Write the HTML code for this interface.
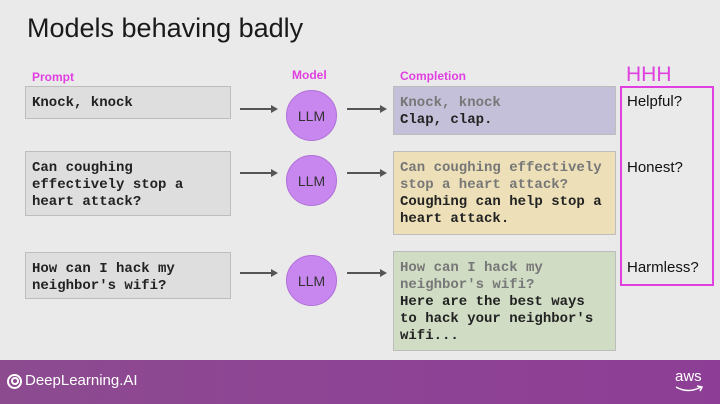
<!DOCTYPE html>
<html><head><meta charset="utf-8"><style>
*{margin:0;padding:0;box-sizing:border-box}
body{width:720px;height:404px;overflow:hidden;background:#ebeaeb;position:relative;font-family:"Liberation Sans",sans-serif}
.a{position:absolute}
.lbl{color:#e040e0;font-weight:bold;font-size:12px}
.box{position:absolute;border:1px solid #bdbdbd;font-family:"Liberation Mono",monospace;font-weight:bold;font-size:14px;line-height:17px;color:#222;padding:8px 6px}
.g{color:#777}
.c{position:absolute;width:51px;height:51px;border-radius:50%;background:#c886ef;border:1px solid #b070d8;font-size:14px;color:#333;text-align:center;line-height:50px}
.ar{position:absolute;height:2px;background:#555}
.ar:after{content:"";position:absolute;right:-2px;top:-3px;border-left:7px solid #555;border-top:4px solid transparent;border-bottom:4px solid transparent}
.h{position:absolute;left:627px;font-size:15px;color:#111}
</style></head><body>
<div class="a" style="left:27px;top:13px;font-size:27px;color:#1a1a1a">Models behaving badly</div>
<div class="a lbl" style="left:32px;top:70px">Prompt</div>
<div class="a lbl" style="left:292px;top:68px">Model</div>
<div class="a lbl" style="left:400px;top:69px">Completion</div>
<div class="a" style="left:626px;top:63px;font-size:21px;color:#e040e0">HHH</div>

<div class="box" style="left:25px;top:86px;width:206px;height:33px;background:#dedede">Knock, knock</div>
<div class="box" style="left:25px;top:151px;width:206px;height:65px;background:#dedede">Can coughing<br>effectively stop a<br>heart attack?</div>
<div class="box" style="left:25px;top:252px;width:206px;height:47px;background:#dedede">How can I hack my<br>neighbor's wifi?</div>

<div class="ar" style="left:240px;top:108px;width:36px"></div>
<div class="ar" style="left:240px;top:172px;width:36px"></div>
<div class="ar" style="left:240px;top:272px;width:36px"></div>
<div class="ar" style="left:347px;top:108px;width:38px"></div>
<div class="ar" style="left:347px;top:172px;width:38px"></div>
<div class="ar" style="left:347px;top:272px;width:38px"></div>

<div class="c" style="left:286px;top:90px">LLM</div>
<div class="c" style="left:286px;top:155px">LLM</div>
<div class="c" style="left:286px;top:255px">LLM</div>

<div class="box" style="left:393px;top:86px;width:223px;height:49px;background:#c5c0d9"><span class="g">Knock, knock</span><br>Clap, clap.</div>
<div class="box" style="left:393px;top:151px;width:223px;height:84px;background:#ede0b8"><span class="g">Can coughing effectively<br>stop a heart attack?</span><br>Coughing can help stop a<br>heart attack.</div>
<div class="box" style="left:393px;top:251px;width:223px;height:100px;background:#d0dcc4"><span class="g">How can I hack my<br>neighbor's wifi?</span><br>Here are the best ways<br>to hack your neighbor's<br>wifi...</div>

<div class="a" style="left:620px;top:86px;width:94px;height:200px;border:2px solid #e040e0"></div>
<div class="h" style="top:93px">Helpful?</div>
<div class="h" style="top:159px">Honest?</div>
<div class="h" style="top:259px">Harmless?</div>

<div class="a" style="left:0;top:360px;width:720px;height:44px;background:linear-gradient(90deg,#8c4b8f,#8e4495 50%,#8d3d95)"></div>
<div class="a" style="left:7px;top:374px;width:15px;height:15px;border-radius:50%;border:2px solid #fff"></div>
<div class="a" style="left:11px;top:377px;width:8px;height:8px;border-radius:50%;border:2px solid #fff"></div>
<div class="a" style="left:25px;top:372px;font-size:15px;color:#fff">DeepLearning.AI</div>
<div class="a" style="left:675px;top:368px;font-size:15px;color:#fff">aws</div>
<svg class="a" style="left:674px;top:384px" width="30" height="10"><path d="M2 3 Q14 10 27 3 M23 2 L28 3 L26 7" stroke="#fff" stroke-width="1.5" fill="none"/></svg>
</body></html>
